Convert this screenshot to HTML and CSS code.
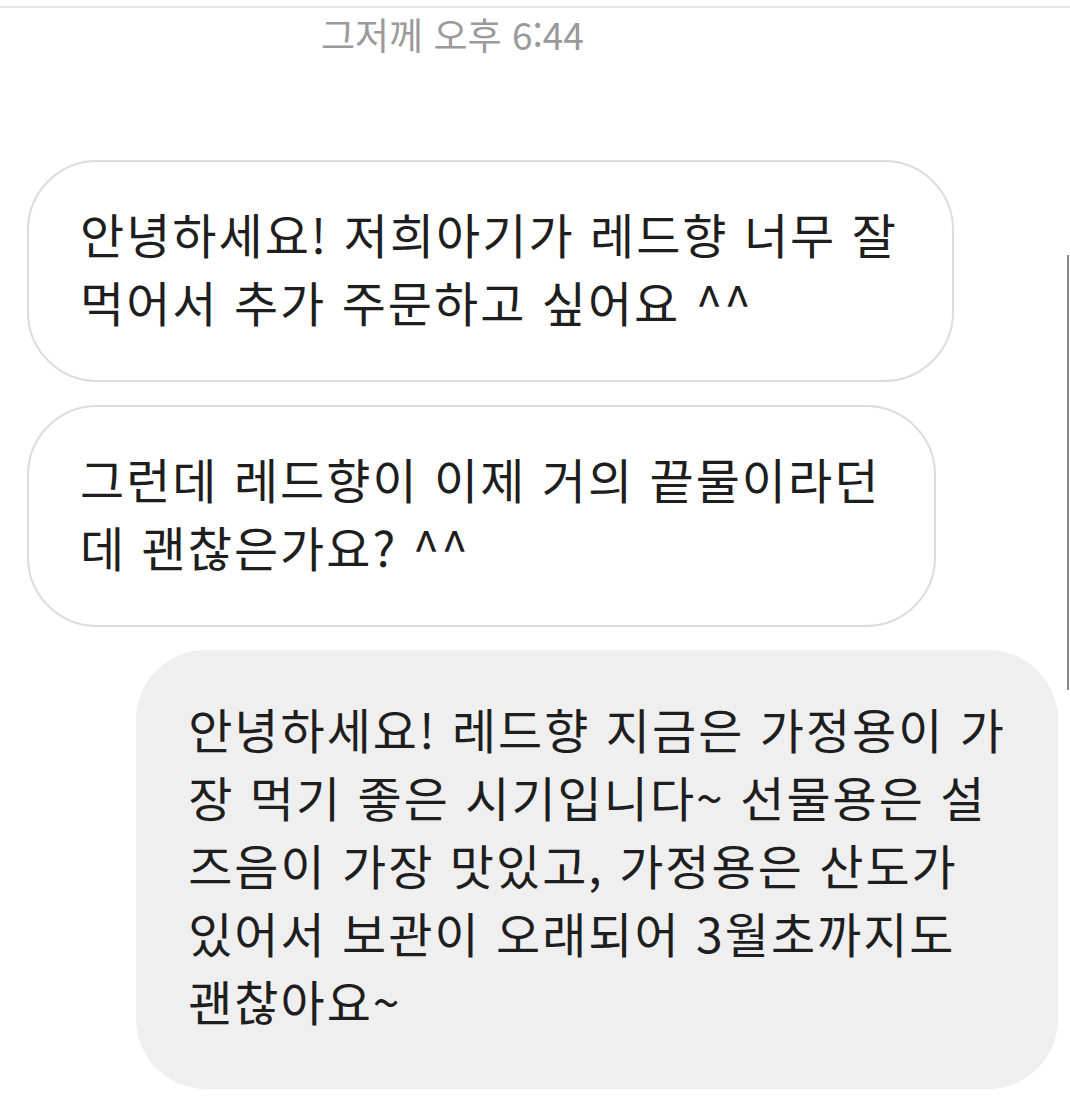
FILE: index.html
```html
<!DOCTYPE html>
<html lang="ko">
<head>
<meta charset="utf-8">
<link rel="stylesheet" href="styles.css">
</head>
<body>
<div class="screen">
  <div class="topline"></div>
  <div class="time">그저께 오후 6:44</div>
  <div class="thread">
    <div class="msg in">안녕하세요! 저희아기가 레드향 너무 잘<br>먹어서 추가 주문하고 싶어요 ^^</div>
    <div class="msg in">그런데 레드향이 이제 거의 끝물이라던<br>데 괜찮은가요? ^^</div>
    <div class="msg out">안녕하세요! 레드향 지금은 가정용이 가<br>장 먹기 좋은 시기입니다~ 선물용은 설<br>즈음이 가장 맛있고, 가정용은 산도가<br>있어서 보관이 오래되어 3월초까지도<br>괜찮아요~</div>
  </div>
  <div class="scrollbar"></div>
</div>
</body>
</html>
```

FILE: styles.css
```css
html, body {
  margin: 0;
  padding: 0;
  background: #ffffff;
}
.screen {
  position: relative;
  width: 1070px;
  height: 1096px;
  overflow: hidden;
  font-family: "Noto Sans CJK KR", "Noto Sans", sans-serif;
  color: #1e1e1e;
}
.topline {
  margin-top: 6px;
  height: 2px;
  background: #e6e6e6;
}
.time {
  padding-left: 321px;
  font-size: 37px;
  line-height: 52px;
  color: #9a9a9a;
}
.thread {
  display: flex;
  flex-direction: column;
  gap: 23px;
  padding: 0 12px 0 27px;
  margin-top: 100px;
}
.msg {
  font-size: 48px;
  line-height: 68px;
  letter-spacing: 2px;
  border-radius: 70px;
  white-space: nowrap;
}
.msg.in {
  align-self: flex-start;
  border: 2px solid #dcdcdc;
  padding: 37px 54px 45px 51px;
}
.msg.out {
  align-self: flex-end;
  background: #efefef;
  padding: 44px 52px 55px 52px;
}
.scrollbar {
  position: absolute;
  left: 1067px;
  top: 255px;
  width: 2px;
  height: 435px;
  background: #8a8a8a;
}
```
